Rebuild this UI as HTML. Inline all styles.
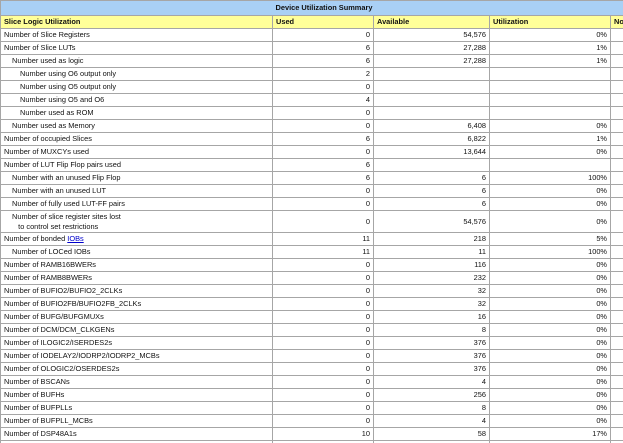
<!DOCTYPE html>
<html><head><meta charset="utf-8"><style>
html,body{margin:0;padding:0;background:#fff;width:623px;height:443px;overflow:hidden}
table{border-collapse:collapse;table-layout:fixed;width:650px;font-family:"Liberation Sans",sans-serif;font-size:7.4px;color:#111}
td{border:1px solid #a6a6a6;height:12px;padding:0 3px;white-space:nowrap;overflow:hidden;line-height:12px;box-sizing:border-box}
tr{height:13px}
td.r{text-align:right}
.t td{background:#a9d0f5;font-weight:bold;text-align:center;height:15px;border-top:1px solid #a6a6a6}
.t{height:15px}
.h td{background:#ffff99;font-weight:bold}
.i1{padding-left:11px}
.i2{padding-left:19px}
.d{height:22px}
.d td{height:22px;line-height:9.5px}
a{color:#00c;text-decoration:underline}
</style></head><body>
<table>
<col style="width:272px"><col style="width:101px"><col style="width:116px"><col style="width:121px"><col style="width:40px">
<tr class="t"><td colspan="5" style="padding-left:0">Device Utilization Summary</td></tr>
<tr class="h"><td>Slice Logic Utilization</td><td>Used</td><td>Available</td><td>Utilization</td><td>Note(s)</td></tr>
<tr><td>Number of Slice Registers</td><td class="r">0</td><td class="r">54,576</td><td class="r">0%</td><td></td></tr>
<tr><td>Number of Slice LUTs</td><td class="r">6</td><td class="r">27,288</td><td class="r">1%</td><td></td></tr>
<tr><td class="i1">Number used as logic</td><td class="r">6</td><td class="r">27,288</td><td class="r">1%</td><td></td></tr>
<tr><td class="i2">Number using O6 output only</td><td class="r">2</td><td></td><td></td><td></td></tr>
<tr><td class="i2">Number using O5 output only</td><td class="r">0</td><td></td><td></td><td></td></tr>
<tr><td class="i2">Number using O5 and O6</td><td class="r">4</td><td></td><td></td><td></td></tr>
<tr><td class="i2">Number used as ROM</td><td class="r">0</td><td></td><td></td><td></td></tr>
<tr><td class="i1">Number used as Memory</td><td class="r">0</td><td class="r">6,408</td><td class="r">0%</td><td></td></tr>
<tr><td>Number of occupied Slices</td><td class="r">6</td><td class="r">6,822</td><td class="r">1%</td><td></td></tr>
<tr><td>Number of MUXCYs used</td><td class="r">0</td><td class="r">13,644</td><td class="r">0%</td><td></td></tr>
<tr><td>Number of LUT Flip Flop pairs used</td><td class="r">6</td><td></td><td></td><td></td></tr>
<tr><td class="i1">Number with an unused Flip Flop</td><td class="r">6</td><td class="r">6</td><td class="r">100%</td><td></td></tr>
<tr><td class="i1">Number with an unused LUT</td><td class="r">0</td><td class="r">6</td><td class="r">0%</td><td></td></tr>
<tr><td class="i1">Number of fully used LUT-FF pairs</td><td class="r">0</td><td class="r">6</td><td class="r">0%</td><td></td></tr>
<tr class="d"><td class="i1">Number of slice register sites lost<br>&nbsp;&nbsp;&nbsp;to control set restrictions</td><td class="r">0</td><td class="r">54,576</td><td class="r">0%</td><td></td></tr>
<tr><td>Number of bonded <a>IOBs</a></td><td class="r">11</td><td class="r">218</td><td class="r">5%</td><td></td></tr>
<tr><td class="i1">Number of LOCed IOBs</td><td class="r">11</td><td class="r">11</td><td class="r">100%</td><td></td></tr>
<tr><td>Number of RAMB16BWERs</td><td class="r">0</td><td class="r">116</td><td class="r">0%</td><td></td></tr>
<tr><td>Number of RAMB8BWERs</td><td class="r">0</td><td class="r">232</td><td class="r">0%</td><td></td></tr>
<tr><td>Number of BUFIO2/BUFIO2_2CLKs</td><td class="r">0</td><td class="r">32</td><td class="r">0%</td><td></td></tr>
<tr><td>Number of BUFIO2FB/BUFIO2FB_2CLKs</td><td class="r">0</td><td class="r">32</td><td class="r">0%</td><td></td></tr>
<tr><td>Number of BUFG/BUFGMUXs</td><td class="r">0</td><td class="r">16</td><td class="r">0%</td><td></td></tr>
<tr><td>Number of DCM/DCM_CLKGENs</td><td class="r">0</td><td class="r">8</td><td class="r">0%</td><td></td></tr>
<tr><td>Number of ILOGIC2/ISERDES2s</td><td class="r">0</td><td class="r">376</td><td class="r">0%</td><td></td></tr>
<tr><td>Number of IODELAY2/IODRP2/IODRP2_MCBs</td><td class="r">0</td><td class="r">376</td><td class="r">0%</td><td></td></tr>
<tr><td>Number of OLOGIC2/OSERDES2s</td><td class="r">0</td><td class="r">376</td><td class="r">0%</td><td></td></tr>
<tr><td>Number of BSCANs</td><td class="r">0</td><td class="r">4</td><td class="r">0%</td><td></td></tr>
<tr><td>Number of BUFHs</td><td class="r">0</td><td class="r">256</td><td class="r">0%</td><td></td></tr>
<tr><td>Number of BUFPLLs</td><td class="r">0</td><td class="r">8</td><td class="r">0%</td><td></td></tr>
<tr><td>Number of BUFPLL_MCBs</td><td class="r">0</td><td class="r">4</td><td class="r">0%</td><td></td></tr>
<tr><td>Number of DSP48A1s</td><td class="r">10</td><td class="r">58</td><td class="r">17%</td><td></td></tr>
<tr><td>&nbsp;</td><td></td><td></td><td></td><td></td></tr>
</table>
</body></html>
